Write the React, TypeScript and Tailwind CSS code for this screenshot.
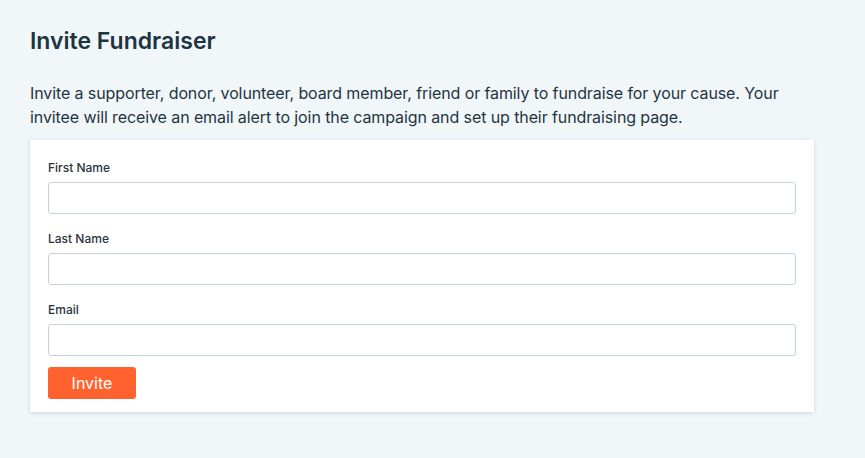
import React from "react";

function Field({ label, type = "text" }: { label: string; type?: string }) {
  return (
    <div className="flex flex-col">
      <label className="text-[12px] leading-[18px] text-[#2b3440] mb-[5px] font-medium">{label}</label>
      <input
        type={type}
        className="h-[32px] w-full rounded-[3px] border border-[#c3d3dd] bg-white px-2 text-[14px] outline-none"
      />
    </div>
  );
}

export default function App() {
  return (
    <div
      className="min-h-[458px] w-full bg-[#f1f6f9] pl-[30px] pt-[26px] text-[#1f3542]"
      style={{ fontFamily: "Inter, 'Noto Sans', sans-serif" }}
    >
      <h1 className="text-[23px] leading-[30px] font-semibold text-[#1d3442]">Invite Fundraiser</h1>
      <p className="mt-[25px] w-[780px] text-[16px] leading-[24px] tracking-[-0.1px] text-[#1f3542]">
        Invite a supporter, donor, volunteer, board member, friend or family to fundraise for your cause. Your
        invitee will receive an email alert to join the campaign and set up their fundraising page.
      </p>
      <div className="mt-[11px] w-[784px] bg-white px-[18px] pt-[19px] pb-[13px] shadow-[0_1px_4px_rgba(150,180,210,0.45)]">
        <div className="flex flex-col gap-[16px]">
          <Field label="First Name" />
          <Field label="Last Name" />
          <Field label="Email" type="email" />
        </div>
        <button className="mt-[11px] h-[32px] w-[88px] rounded-[3px] bg-[#ff622f] text-[16px] text-white">
          Invite
        </button>
      </div>
    </div>
  );
}
